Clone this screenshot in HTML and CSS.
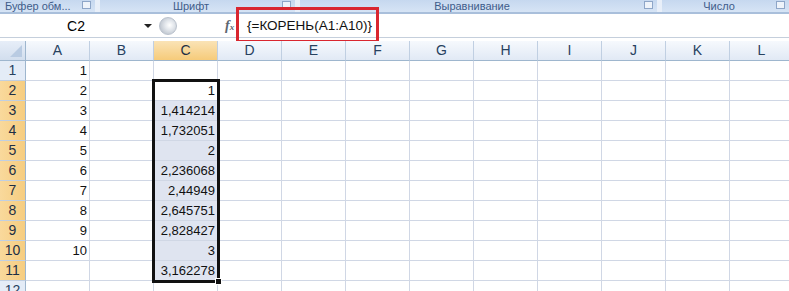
FILE: index.html
```html
<!DOCTYPE html>
<html lang="ru">

<head>
    <meta charset="UTF-8">
    <title>КОРЕНЬ</title>
    <link rel="stylesheet" href="styles.css">
</head>

<body>
    <div class="ribbon">
        <div class="group g-clip"><span>Буфер обм...</span><i class="launcher"></i></div>
        <div class="group g-font"><span>Шрифт</span><i class="launcher"></i></div>
        <div class="group g-align"><span>Выравнивание</span><i class="launcher"></i></div>
        <div class="group g-num"><span>Число</span><i class="launcher"></i></div>
    </div>

    <div class="formula-bar">
        <div class="name-box">
            <span class="cell-ref">C2</span>
            <i class="drop"></i>
        </div>
        <div class="round-btn"></div>
        <div class="fx">f<small>x</small></div>
        <div class="formula">
            {=КОРЕНЬ(A1:A10)}
            <div class="mark"></div>
        </div>
    </div>

    <div class="sheet" id="sheet"></div>

    <script>
        const cols = ["A", "B", "C", "D", "E", "F", "G", "H", "I", "J", "K", "L"];
        const colC = ["", "1", "1,414214", "1,732051", "2", "2,236068", "2,44949", "2,645751", "2,828427", "3", "3,162278", ""];
        const sheet = document.getElementById("sheet");

        let html = `<div class="corner"><i></i></div>`;
        cols.forEach(c => {
            html += `<div class="col-head${c === "C" ? " active" : ""}">${c}</div>`;
        });

        for (let r = 1; r <= 12; r++) {
            let active = r >= 2 && r <= 11;
            html += `<div class="row-head${active ? " active" : ""}">${r}</div>`;
            cols.forEach(c => {
                let val = "";
                let cls = "cell";
                if (c === "A" && r <= 10) val = r;
                if (c === "C") {
                    val = colC[r - 1];
                    if (r >= 3 && r <= 11) cls += " sel";
                }
                html += `<div class="${cls}">${val}</div>`;
            });
        }

        html += `<div class="range"><i class="handle"></i></div>`;
        sheet.innerHTML = html;
    </script>
</body>

</html>
```

FILE: styles.css
```css
body {
    margin: 0;
    width: 789px;
    height: 291px;
    overflow: hidden;
    background: #fff;
    font-family: "Liberation Sans", Arial, sans-serif;
}

/* ribbon group captions */
.ribbon {
    display: flex;
    height: 12px;
    border-bottom: 2px solid #a9bfdb;
    background: #e8eff9;
    overflow: hidden;
}

.group {
    display: flex;
    align-items: flex-end;
    height: 12px;
    margin-right: 5px;
    background: linear-gradient(#c6d8ef, #d6e4f5);
    color: #3e5c8a;
    font-size: 11px;
    line-height: 12px;
}

.group span {
    flex: 1;
    text-align: center;
}

.launcher {
    width: 7px;
    height: 6px;
    margin: 0 4px 3px 0;
    border: 1px solid #8ea6c8;
    background: #eef3fa;
}

.g-clip {
    width: 95px;
}

.g-clip span {
    text-align: left;
    padding-left: 5px;
}

.g-font {
    width: 195px;
}

.g-align {
    width: 357px;
}

.g-num {
    flex: 1;
    margin-right: 0;
}

/* formula bar */
.formula-bar {
    display: flex;
    align-items: center;
    height: 23px;
    border-bottom: 1px solid #c5cfdc;
    margin-bottom: 3px;
}

.name-box {
    display: flex;
    align-items: center;
    width: 156px;
    height: 23px;
}

.cell-ref {
    flex: 1;
    text-align: center;
    font-size: 14px;
    padding-left: 8px;
}

.drop {
    width: 0;
    height: 0;
    margin-right: 4px;
    border-left: 4px solid transparent;
    border-right: 4px solid transparent;
    border-top: 4px solid #222;
}

.round-btn {
    width: 16px;
    height: 16px;
    border-radius: 50%;
    margin-left: 3px;
    border: 1px solid #b9c1cc;
    background: radial-gradient(circle at 60% 45%, #ffffff 0, #e3e7ec 35%, #aab3bf 100%);
}

.fx {
    margin-left: 48px;
    width: 13px;
    font-family: "Liberation Serif", serif;
    font-style: italic;
    font-weight: bold;
    font-size: 14px;
    color: #5d6670;
}

.fx small {
    font-size: 9px;
}

.formula {
    position: relative;
    flex: 1;
    height: 23px;
    line-height: 23px;
    padding-left: 8px;
    border-left: 1px solid #d4dbe5;
    font-size: 13.5px;
    color: #111;
}

/* red annotation frame */
.mark {
    position: absolute;
    left: -3px;
    top: -7px;
    width: 137px;
    height: 30px;
    border: 3px solid #d9262f;
}

/* sheet grid */
.sheet {
    position: relative;
    display: grid;
    grid-template-columns: 26px repeat(12, 64px);
    grid-auto-rows: 20px;
    font-size: 14px;
}

.sheet > div {
    box-sizing: border-box;
}

.corner {
    position: relative;
    background: linear-gradient(#e7eef8, #d2deee);
    border-right: 1px solid #9eb6ce;
    border-bottom: 1px solid #9eb6ce;
}

.corner i {
    position: absolute;
    right: 3px;
    bottom: 3px;
    width: 0;
    height: 0;
    border-left: 12px solid transparent;
    border-bottom: 12px solid #b9cbe2;
}

.col-head {
    text-align: center;
    line-height: 19px;
    color: #27415f;
    background: linear-gradient(#f6f9fd, #e1e9f5);
    border-right: 1px solid #c0cfe2;
    border-bottom: 1px solid #9eb6ce;
}

.col-head.active {
    background: linear-gradient(#fae3b6, #f6cb7a);
    color: #1e2f44;
}

.row-head {
    text-align: center;
    line-height: 19px;
    color: #27415f;
    background: #e4ecf7;
    border-right: 1px solid #9eb6ce;
    border-bottom: 1px solid #c0cfe2;
}

.row-head.active {
    background: linear-gradient(90deg, #f9d99c, #f6cd80);
    color: #1e2f44;
}

.cell {
    text-align: right;
    line-height: 19px;
    padding-right: 2px;
    font-size: 13px;
    color: #111;
    border-right: 1px solid #d0d7e5;
    border-bottom: 1px solid #d0d7e5;
}

.cell.sel {
    background: #dfe4f0;
}

/* selected range C2:C11, laid over the grid cells */
.range {
    position: absolute;
    grid-column: 4 / 5;
    grid-row: 3 / 13;
    top: -2px;
    left: -2px;
    right: -2px;
    bottom: -2px;
    border: 3px solid #111;
}

.handle {
    position: absolute;
    right: -5px;
    bottom: -5px;
    width: 5px;
    height: 5px;
    background: #111;
    border: 1px solid #fff;
}
```
